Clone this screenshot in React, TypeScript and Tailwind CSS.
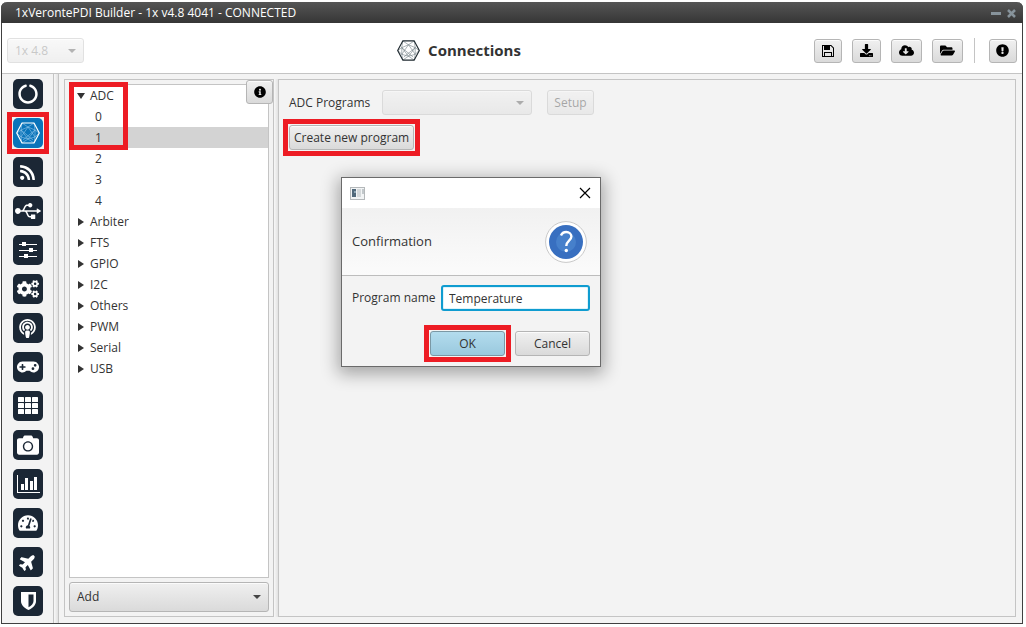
import React, { useState } from 'react';
import {
  FaCamera, FaCircleNotch, FaCloudDownloadAlt, FaCogs, FaDownload, FaExclamationCircle,
  FaFolderOpen, FaGamepad, FaInfoCircle, FaPlane, FaPodcast, FaRss,
  FaTachometerAlt, FaUsb,
} from 'react-icons/fa';

const BUTTON = 'rounded-[3px] border border-[#b5b5b5] bg-linear-to-b from-[#f0f0f0] to-[#dadada] shadow-[inset_0_1px_0_#fbfbfb]';

// Wireframe hexagon used for the Connections section
const MeshIcon = ({ size = 24, stroke, mesh }: { size?: number; stroke: string; mesh: string }) => (
  <svg width={size} height={size} viewBox="0 0 24 24" fill="none" strokeLinejoin="round">
    <g stroke={mesh} strokeWidth="0.6">
      <path d="M6 2L12 6L18 2M6 2L5 9L1 12L5 16L6 22M18 2L19 9L23 12L19 16L18 22M6 22L12 18L18 22" />
      <path d="M5 9L12 6L19 9M5 16L12 18L19 16M5 9L5 16M19 9L19 16M5 9L17 19M19 9L7 19M12 6L5 16M12 6L19 16M12 18L5 9M12 18L19 9" />
    </g>
    <path d="M6 2H18L23.3 12L18 22H6L0.7 12Z" stroke={stroke} strokeWidth="1.2" />
  </svg>
);

const FloppyIcon = () => (
  <svg width="12" height="12" viewBox="0 0 12 12" fill="black">
    <path fillRule="evenodd" d="M0 0H9.200L12 2.800V12H0ZM1 1V11H2V7H10V11H11V3.200L8.800 1H8V5H2V1ZM3 8V11H9V8Z" />
    <path d="M2 1H5.300V4H2Z" />
  </svg>
);

const SlidersIcon = () => (
  <svg width="30" height="30" viewBox="0 0 30 30" fill="white">
    <path d="M6 9h18v1H6zM6 15h18v1H6zM6 21h18v1H6z" />
    <path d="M9 7h4v4H9zM16 13h4v4h-4zM11 19h4v4h-4z" />
  </svg>
);

const GridIcon = () => (
  <svg width="30" height="30" viewBox="0 0 30 30" fill="white">
    {[6, 12, 18].map(y => [5, 12, 19].map(x => (
      <rect key={`${x}-${y}`} x={x} y={y} width="6" height="5" rx="0.6" />
    )))}
  </svg>
);

const BarsIcon = () => (
  <svg width="30" height="30" viewBox="0 0 30 30" fill="white">
    <path d="M4 6h1v17h22v1H4z" />
    <path d="M8 15h3v6H8zM12 9h3v12h-3zM17 12h3v9h-3zM21 8h3v13h-3z" />
  </svg>
);

const ShieldIcon = () => (
  <svg width="30" height="30" viewBox="0 0 30 30">
    <path d="M8 6h15v9c0 4-3 7-7.500 9C11 22 8 19 8 15z" fill="white" />
    <path d="M15.500 8.500h5V15c0 2.500-2 4.700-5 6.300z" fill="#1b2735" />
  </svg>
);

const sections: { name: string; icon: React.ReactNode }[] = [
  { name: 'Veronte', icon: <FaCircleNotch size={20} /> },
  { name: 'Connections', icon: <MeshIcon size={24} stroke="#ffffff" mesh="#8fc4ea" /> },
  { name: 'Telemetry', icon: <FaRss size={17} /> },
  { name: 'Ports', icon: <FaUsb size={26} /> },
  { name: 'Control', icon: <SlidersIcon /> },
  { name: 'Automations', icon: <FaCogs size={22} /> },
  { name: 'Communications', icon: <FaPodcast size={19} /> },
  { name: 'Stick', icon: <FaGamepad size={22} /> },
  { name: 'Blocks', icon: <GridIcon /> },
  { name: 'Camera', icon: <FaCamera size={22} /> },
  { name: 'Variables', icon: <BarsIcon /> },
  { name: 'Panel', icon: <FaTachometerAlt size={20} /> },
  { name: 'Platform', icon: <FaPlane size={18} className="-rotate-45" /> },
  { name: 'Safety', icon: <ShieldIcon /> },
];

const tree = [
  { name: 'ADC', children: ['0', '1', '2', '3', '4'] },
  { name: 'Arbiter' },
  { name: 'FTS' },
  { name: 'GPIO' },
  { name: 'I2C' },
  { name: 'Others' },
  { name: 'PWM' },
  { name: 'Serial' },
  { name: 'USB' },
];

const Caret = ({ open }: { open: boolean }) => (
  <svg width="8" height="8" viewBox="0 0 8 8" fill="#333333">
    <path d={open ? 'M0 1H8L4 7Z' : 'M1 0V8L7 4Z'} />
  </svg>
);

// Red frame drawn around a highlighted control
const Highlight = ({ className }: { className: string }) => (
  <span className={`pointer-events-none absolute z-10 border-5 border-[#ed1c24] ${className}`}></span>
);

interface DropDownProps {
  label: string;
  value: string;
  className: string;
  disabled?: boolean;
  id?: string;
}

function DropDown({ label, value, className, disabled = false, id }: DropDownProps) {
  return (
    <div className={`relative ${disabled ? 'opacity-40' : ''} ${className}`}>
      <select id={id} aria-label={label} disabled={disabled} className={`h-full w-full appearance-none pl-[7px] disabled:text-[#777777] ${BUTTON}`}>
        <option>{value}</option>
      </select>
      <svg className="pointer-events-none absolute top-1/2 right-2 -translate-y-1/2" width="8" height="4" viewBox="0 0 8 4" fill="#444444">
        <path d="M0 0H8L4 4Z" />
      </svg>
    </div>
  );
}

function ToolButton({ label, className, children }: { label: string; className: string; children: React.ReactNode }) {
  return (
    <button aria-label={label} className={`flex h-6 items-center justify-center text-black ${BUTTON} ${className}`}>
      {children}
    </button>
  );
}

function ConnectionTree() {
  const [opened, setOpened] = useState<string[]>(['ADC']);
  const [selected, setSelected] = useState('1');

  const toggle = (name: string) =>
    setOpened(prev => (prev.includes(name) ? prev.filter(n => n !== name) : [...prev, name]));

  return (
    <ul className="flex-1 border border-[#c4c4c4] bg-white">
      {tree.map(group => (
        <li key={group.name}>
          <button className="flex h-[21px] w-full items-center gap-1 pl-[7px] text-left" onClick={() => toggle(group.name)}>
            <Caret open={opened.includes(group.name)} />
            <span className="pl-px">{group.name}</span>
          </button>
          {group.children && opened.includes(group.name) && (
            <ul>
              {group.children.map(child => (
                <li key={child}>
                  <button
                    className={`block h-[21px] w-full pl-[25px] text-left ${selected === child ? 'bg-[#d3d3d3]' : ''}`}
                    onClick={() => setSelected(child)}
                  >
                    {child}
                  </button>
                </li>
              ))}
            </ul>
          )}
        </li>
      ))}
    </ul>
  );
}

function ConfirmationDialog() {
  const [name, setName] = useState('Temperature');

  return (
    <div role="dialog" aria-label="Confirmation" className="absolute top-[175px] left-[339px] w-[260px] border border-[#6a6a6a] bg-[#f3f3f3] shadow-[0_4px_16px_3px_rgba(0,0,0,0.32)]">
      <div className="flex h-[30px] items-center justify-between bg-white px-2">
        <svg width="15" height="13" viewBox="0 0 15 13">
          <rect x="0.500" y="0.500" width="14" height="12" fill="#f2f4f5" stroke="#b4b8ba" />
          <path d="M2 2h4v8H2z" fill="#51697b" />
          <path d="M4 4h2v2H4z" fill="#8ea6b5" />
          <path d="M7 2h4v8H7z" fill="#d5d9db" />
          <path d="M12 2h2v5h-2z" fill="#c2c8cb" />
        </svg>
        <button aria-label="Close" className="mr-px">
          <svg width="12" height="12" viewBox="0 0 12 12" stroke="black" strokeWidth="1.2">
            <path d="M1 1L11 11M11 1L1 11" />
          </svg>
        </button>
      </div>
      <div className="flex h-[68px] items-center justify-between border-b border-[#bdbdbd] bg-linear-to-b from-[#f1f1f1] to-[#fbfbfb] px-[10px]">
        <h2 className="text-[13px]">Confirmation</h2>
        <svg className="mr-[3px]" width="42" height="42" viewBox="0 0 42 42">
          <circle cx="21" cy="21" r="20.400" fill="white" stroke="#c9c9c9" />
          <circle cx="21" cy="21" r="17" fill="#386fc0" />
          <circle cx="21" cy="21" r="10" fill="#4680cb" />
          <path d="M16 14.500C17 11.800 19 11 21.200 11C24.200 11 26.400 12.900 26.400 15.600C26.400 19.600 21.300 20 21.300 25" fill="none" stroke="white" strokeWidth="2.400" />
          <circle cx="21.300" cy="29.500" r="1.700" fill="white" />
        </svg>
      </div>
      <form className="px-[10px] pt-[9px] pb-[10px]" onSubmit={e => e.preventDefault()}>
        <div className="flex items-center justify-between">
          <label htmlFor="program-name">Program name</label>
          <input
            id="program-name"
            value={name}
            onChange={e => setName(e.target.value)}
            className="h-[26px] w-[149px] rounded-[3px] border-2 border-[#0f9cd0] bg-white px-[6px] shadow-[inset_0_0_0_1px_#dff3fa] outline-none"
          />
        </div>
        <div className="mt-5 flex justify-end gap-[10px]">
          <div className="relative">
            <button className="h-[25px] w-[75px] rounded-[3px] border border-[#7b98a5] bg-linear-to-b from-[#b3dcee] to-[#9ac9de]">OK</button>
            <Highlight className="-inset-[6px]" />
          </div>
          <button className={`h-[25px] w-[75px] ${BUTTON}`}>Cancel</button>
        </div>
      </form>
    </div>
  );
}

export default function App() {
  const [section, setSection] = useState('Connections');

  return (
    <div className="flex min-h-screen bg-white pt-[2px] pr-[3px] pb-[3px] pl-px font-['Open_Sans',sans-serif] text-[12px] text-[#333333]">
      <div className="relative flex flex-1 flex-col rounded-t-md border border-t-0 border-[#404040] bg-[#f3f3f3]">
        <header className="-mx-px flex h-[21px] items-center justify-between rounded-t-md bg-linear-to-b from-[#555555] to-[#363636] pt-px pr-[7px] pl-[14px] text-white">
          <span>1xVerontePDI Builder - 1x v4.8 4041 - CONNECTED</span>
          <div className="flex items-center gap-[6px]">
            <button aria-label="Minimize" className="h-[3px] w-[10px] bg-[#87939b]"></button>
            <button aria-label="Close window">
              <svg width="9" height="9" viewBox="0 0 9 9" stroke="#87939b" strokeWidth="2.500">
                <path d="M1 1L8 8M8 1L1 8" />
              </svg>
            </button>
          </div>
        </header>

        <div className="flex h-[51px] items-center justify-between border-b border-[#c4c4c4] bg-white px-[5px] pt-[5px]">
          <DropDown label="Version" value="1x 4.8" disabled className="h-[25px] w-[77px]" />
          <h1 className="flex items-center gap-2 pl-5 text-[15px] font-bold">
            <MeshIcon size={23} stroke="#1f2a30" mesh="#6d7a80" />
            Connections
          </h1>
          <div className="flex items-center gap-[10px]">
            <ToolButton label="Save" className="w-7"><FloppyIcon /></ToolButton>
            <ToolButton label="Download" className="w-[29px]"><FaDownload size={13} /></ToolButton>
            <ToolButton label="Download from cloud" className="w-[31px]"><FaCloudDownloadAlt size={15} /></ToolButton>
            <ToolButton label="Open" className="w-[31px]"><FaFolderOpen size={15} /></ToolButton>
            <div className="mx-px mr-[4px] h-[25px] w-px bg-[#c4c4c4]"></div>
            <ToolButton label="Alerts" className="w-7"><FaExclamationCircle size={13} /></ToolButton>
          </div>
        </div>

        <div className="flex flex-1">
          <nav className="flex w-[51px] flex-col items-center gap-[9px] pt-[5px]">
            {sections.map(({ name, icon }) => (
              <div key={name} className="relative">
                <button
                  aria-label={name}
                  onClick={() => setSection(name)}
                  className={`flex size-[30px] items-center justify-center rounded-[5px] text-white ${section === name ? 'bg-[#0a74ba]' : 'bg-[#1b2735]'}`}
                >
                  {icon}
                </button>
                {name === 'Connections' && <Highlight className="-inset-[6px]" />}
              </div>
            ))}
          </nav>

          <div className="w-[6px] border-x border-[#c4c4c4] bg-linear-to-r from-[#f8f8f8] to-[#e2e2e2]"></div>

          <main className="flex flex-1 p-[5px] pr-[6px] pb-[6px]">
            <aside className="relative flex w-[210px] flex-col gap-1 border border-[#c4c4c4] p-1">
              <ConnectionTree />
              <DropDown label="Add" value="Add" className="h-[30px]" />
              <button aria-label="Information" className={`absolute top-0 right-0 flex h-6 w-[27px] items-center justify-center text-black ${BUTTON}`}>
                <FaInfoCircle size={12} />
              </button>
              <Highlight className="top-[2px] left-[4px] h-[68px] w-[59px]" />
            </aside>
            <div className="w-1 bg-linear-to-r from-[#f8f8f8] to-[#e2e2e2]"></div>
            <section className="flex flex-1 flex-col items-start gap-[10px] border border-[#c4c4c4] p-[10px]">
              <div className="flex items-center">
                <label htmlFor="adc-programs" className="w-[93px]">ADC Programs</label>
                <DropDown id="adc-programs" label="ADC Programs" value="" disabled className="h-[25px] w-[150px]" />
                <button disabled className={`ml-[15px] h-[25px] w-[47px] opacity-40 ${BUTTON}`}>Setup</button>
              </div>
              <div className="relative">
                <button className={`h-[25px] px-1 ${BUTTON}`}>Create new program</button>
                <Highlight className="-inset-[6px]" />
              </div>
            </section>
          </main>
        </div>

        <ConfirmationDialog />
      </div>
    </div>
  );
}
